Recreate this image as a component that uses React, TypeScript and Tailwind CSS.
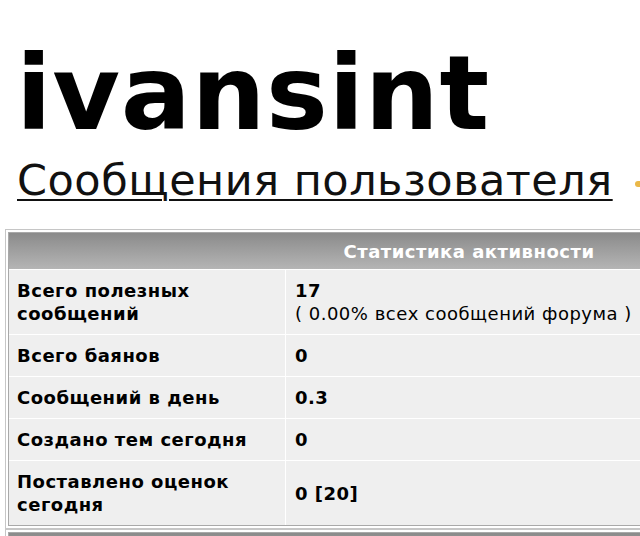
const stats = [
  { label: ['Всего полезных', 'сообщений'], value: '17', note: '( 0.00% всех сообщений форума )' },
  { label: ['Всего баянов'], value: '0' },
  { label: ['Сообщений в день'], value: '0.3' },
  { label: ['Создано тем сегодня'], value: '0' },
  { label: ['Поставлено оценок', 'сегодня'], value: '0 [20]' },
];

export default function App() {
  return (
    <div className="w-[640px] h-[536px] overflow-hidden bg-white text-black font-['DejaVu_Sans',Verdana,sans-serif]">
      <h1 className="pl-[16px] pt-[41px] text-[104px] leading-none font-bold tracking-[0.6px]">ivansint</h1>

      <div className="mt-[14px] pl-[17px] flex items-center whitespace-nowrap">
        <a href="#" className="text-[43px] leading-none tracking-[0.5px] underline decoration-2 underline-offset-[4px] text-[#111]">
          Сообщения пользователя
        </a>
        {/* orange bullet, cut off by the window edge */}
        <span className="ml-[22px] mt-[6px] w-[8px] h-[6px] shrink-0 rounded-full bg-[#eab848]" />
      </div>

      {/* Activity stats */}
      <div className="mt-[27px] ml-[5px] w-[928px] border border-[#c6c6c6] p-[2px]">
        <div className="border border-[#a9a9a9] bg-white text-[18px] leading-[23px] tracking-[0.5px]">
          <div className="h-[36px] flex items-center justify-center bg-gradient-to-b from-[#8b8b8b] to-[#b5b5b5] text-white font-bold">
            Статистика активности
          </div>
          <div className="grid grid-cols-[276px_1fr] gap-px pt-px">
            {stats.map((s, i) => (
              <div key={i} className="contents">
                <div className="bg-[#efefef] px-2 py-[9px] font-bold">
                  {s.label.map((l) => (
                    <div key={l}>{l}</div>
                  ))}
                </div>
                <div className="bg-[#efefef] px-[9px] py-[9px] flex flex-col justify-center">
                  <div className="font-bold">{s.value}</div>
                  {s.note && <div>{s.note}</div>}
                </div>
              </div>
            ))}
          </div>
        </div>
      </div>

      <div className="ml-[5px] w-[928px] border border-[#c6c6c6] p-[2px]">
        <div className="border border-[#a9a9a9] h-[36px] bg-gradient-to-b from-[#8b8b8b] to-[#b5b5b5]" />
      </div>
    </div>
  );
}
